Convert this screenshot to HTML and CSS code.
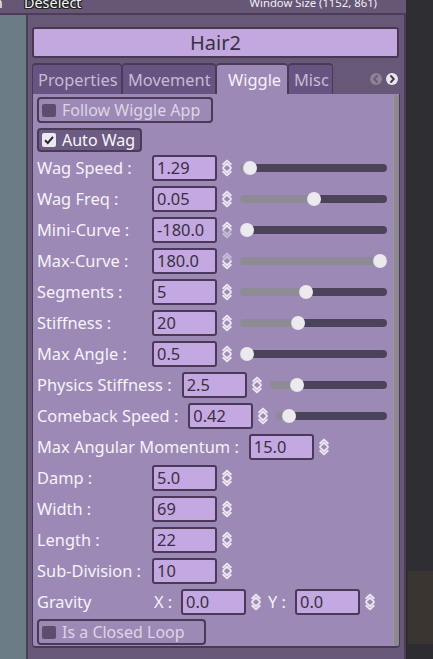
FILE: index.html
```html
<!DOCTYPE html>
<html>
<head>
<meta charset="utf-8">
<link rel="stylesheet" href="styles.css">
</head>
<body>
<div class="screen">
  <div class="left-col">
    <div class="topbar">
      <span class="tb-cut">n</span>
      <span class="tb-btn">Deselect</span>
      <span class="tb-info">Window Size (1152, 861)</span>
    </div>
    <div class="lower">
      <div class="strip"></div>
      <div class="panel">
        <div class="title">Hair2</div>
        <div class="tabs">
          <div class="tab">Properties</div>
          <div class="tab">Movement</div>
          <div class="tab active">Wiggle</div>
          <div class="tab">Misc</div>
          <div class="tab-arrows">
            <span class="arrow dim"><svg viewBox="0 0 12 12" width="12" height="12"><path d="M7 3 L4.2 6 L7 9" fill="none" stroke="#6a5f76" stroke-width="2" stroke-linecap="round" stroke-linejoin="round"/></svg></span>
            <span class="arrow"><svg viewBox="0 0 12 12" width="12" height="12"><path d="M5 3 L7.8 6 L5 9" fill="none" stroke="#4a4054" stroke-width="2" stroke-linecap="round" stroke-linejoin="round"/></svg></span>
          </div>
        </div>
        <div class="content">
          <div class="content-inner">
            <div class="check-btn follow"><span class="box"></span><span class="cb-text">Follow Wiggle App</span></div>
            <div class="check-btn on autowag"><span class="box checked"><svg viewBox="0 0 14 14" width="14" height="14"><path d="M3 7.2 L5.8 10 L11 3.8" fill="none" stroke="#2f2836" stroke-width="2"/></svg></span><span class="cb-text">Auto Wag</span></div>

            <div class="row"><span class="lbl">Wag Speed :</span><span class="num">1.29</span><span class="spin"><svg viewBox="0 0 10 18" width="10" height="18"><path d="M1.2 5.2 L5 1.6 L8.8 5.2 M1.2 8.4 L5 4.8 L8.8 8.4 M1.2 9.6 L5 13.2 L8.8 9.6 M1.2 12.8 L5 16.4 L8.8 12.8" /></svg></span><span class="slider" style="--f:0.023"><span class="grab"></span></span></div>
            <div class="row"><span class="lbl">Wag Freq :</span><span class="num">0.05</span><span class="spin"><svg viewBox="0 0 10 18" width="10" height="18"><path d="M1.2 5.2 L5 1.6 L8.8 5.2 M1.2 8.4 L5 4.8 L8.8 8.4 M1.2 9.6 L5 13.2 L8.8 9.6 M1.2 12.8 L5 16.4 L8.8 12.8" /></svg></span><span class="slider" style="--f:0.5"><span class="grab"></span></span></div>
            <div class="row"><span class="lbl">Mini-Curve :</span><span class="num">-180.0</span><span class="spin"><svg viewBox="0 0 10 18" width="10" height="18"><path d="M1.2 5.2 L5 1.6 L8.8 5.2 M1.2 8.4 L5 4.8 L8.8 8.4" /><path class="off" d="M1.2 9.6 L5 13.2 L8.8 9.6 M1.2 12.8 L5 16.4 L8.8 12.8" /></svg></span><span class="slider" style="--f:0"><span class="grab"></span></span></div>
            <div class="row"><span class="lbl">Max-Curve :</span><span class="num">180.0</span><span class="spin"><svg viewBox="0 0 10 18" width="10" height="18"><path class="off" d="M1.2 5.2 L5 1.6 L8.8 5.2 M1.2 8.4 L5 4.8 L8.8 8.4" /><path d="M1.2 9.6 L5 13.2 L8.8 9.6 M1.2 12.8 L5 16.4 L8.8 12.8" /></svg></span><span class="slider" style="--f:1"><span class="grab"></span></span></div>
            <div class="row"><span class="lbl">Segments :</span><span class="num">5</span><span class="spin"><svg viewBox="0 0 10 18" width="10" height="18"><path d="M1.2 5.2 L5 1.6 L8.8 5.2 M1.2 8.4 L5 4.8 L8.8 8.4 M1.2 9.6 L5 13.2 L8.8 9.6 M1.2 12.8 L5 16.4 L8.8 12.8" /></svg></span><span class="slider" style="--f:0.44"><span class="grab"></span></span></div>
            <div class="row"><span class="lbl">Stiffness :</span><span class="num">20</span><span class="spin"><svg viewBox="0 0 10 18" width="10" height="18"><path d="M1.2 5.2 L5 1.6 L8.8 5.2 M1.2 8.4 L5 4.8 L8.8 8.4 M1.2 9.6 L5 13.2 L8.8 9.6 M1.2 12.8 L5 16.4 L8.8 12.8" /></svg></span><span class="slider" style="--f:0.386"><span class="grab"></span></span></div>
            <div class="row"><span class="lbl">Max Angle :</span><span class="num">0.5</span><span class="spin"><svg viewBox="0 0 10 18" width="10" height="18"><path d="M1.2 5.2 L5 1.6 L8.8 5.2 M1.2 8.4 L5 4.8 L8.8 8.4 M1.2 9.6 L5 13.2 L8.8 9.6 M1.2 12.8 L5 16.4 L8.8 12.8" /></svg></span><span class="slider" style="--f:0"><span class="grab"></span></span></div>
            <div class="row"><span class="lbl">Physics Stiffness :</span><span class="num">2.5</span><span class="spin"><svg viewBox="0 0 10 18" width="10" height="18"><path d="M1.2 5.2 L5 1.6 L8.8 5.2 M1.2 8.4 L5 4.8 L8.8 8.4 M1.2 9.6 L5 13.2 L8.8 9.6 M1.2 12.8 L5 16.4 L8.8 12.8" /></svg></span><span class="slider" style="--f:0.2"><span class="grab"></span></span></div>
            <div class="row"><span class="lbl">Comeback Speed :</span><span class="num">0.42</span><span class="spin"><svg viewBox="0 0 10 18" width="10" height="18"><path d="M1.2 5.2 L5 1.6 L8.8 5.2 M1.2 8.4 L5 4.8 L8.8 8.4 M1.2 9.6 L5 13.2 L8.8 9.6 M1.2 12.8 L5 16.4 L8.8 12.8" /></svg></span><span class="slider" style="--f:0.06"><span class="grab"></span></span></div>
            <div class="row"><span class="lbl">Max Angular Momentum :</span><span class="num">15.0</span><span class="spin"><svg viewBox="0 0 10 18" width="10" height="18"><path d="M1.2 5.2 L5 1.6 L8.8 5.2 M1.2 8.4 L5 4.8 L8.8 8.4 M1.2 9.6 L5 13.2 L8.8 9.6 M1.2 12.8 L5 16.4 L8.8 12.8" /></svg></span></div>
            <div class="row"><span class="lbl">Damp :</span><span class="num">5.0</span><span class="spin"><svg viewBox="0 0 10 18" width="10" height="18"><path d="M1.2 5.2 L5 1.6 L8.8 5.2 M1.2 8.4 L5 4.8 L8.8 8.4 M1.2 9.6 L5 13.2 L8.8 9.6 M1.2 12.8 L5 16.4 L8.8 12.8" /></svg></span></div>
            <div class="row"><span class="lbl">Width :</span><span class="num">69</span><span class="spin"><svg viewBox="0 0 10 18" width="10" height="18"><path d="M1.2 5.2 L5 1.6 L8.8 5.2 M1.2 8.4 L5 4.8 L8.8 8.4 M1.2 9.6 L5 13.2 L8.8 9.6 M1.2 12.8 L5 16.4 L8.8 12.8" /></svg></span></div>
            <div class="row"><span class="lbl">Length :</span><span class="num">22</span><span class="spin"><svg viewBox="0 0 10 18" width="10" height="18"><path d="M1.2 5.2 L5 1.6 L8.8 5.2 M1.2 8.4 L5 4.8 L8.8 8.4 M1.2 9.6 L5 13.2 L8.8 9.6 M1.2 12.8 L5 16.4 L8.8 12.8" /></svg></span></div>
            <div class="row"><span class="lbl">Sub-Division :</span><span class="num">10</span><span class="spin"><svg viewBox="0 0 10 18" width="10" height="18"><path d="M1.2 5.2 L5 1.6 L8.8 5.2 M1.2 8.4 L5 4.8 L8.8 8.4 M1.2 9.6 L5 13.2 L8.8 9.6 M1.2 12.8 L5 16.4 L8.8 12.8" /></svg></span></div>
            <div class="row"><span class="lbl">Gravity</span><span class="axis x">X :</span><span class="num">0.0</span><span class="spin"><svg viewBox="0 0 10 18" width="10" height="18"><path d="M1.2 5.2 L5 1.6 L8.8 5.2 M1.2 8.4 L5 4.8 L8.8 8.4 M1.2 9.6 L5 13.2 L8.8 9.6 M1.2 12.8 L5 16.4 L8.8 12.8" /></svg></span><span class="axis y">Y :</span><span class="num">0.0</span><span class="spin"><svg viewBox="0 0 10 18" width="10" height="18"><path d="M1.2 5.2 L5 1.6 L8.8 5.2 M1.2 8.4 L5 4.8 L8.8 8.4 M1.2 9.6 L5 13.2 L8.8 9.6 M1.2 12.8 L5 16.4 L8.8 12.8" /></svg></span></div>
            <div class="check-btn closed"><span class="box"></span><span class="cb-text">Is a Closed Loop</span></div>
          </div>
          <div class="scrollbar"></div>
        </div>
      </div>
    </div>
  </div>
  <div class="right-col">
    <div class="rc-top"></div>
    <div class="rc-mid"></div>
    <div class="rc-bot"></div>
  </div>
</div>
</body>
</html>
```

FILE: styles.css
```css
* { box-sizing: border-box; }
html, body { margin: 0; padding: 0; }
body {
  width: 433px;
  height: 659px;
  overflow: hidden;
  background: #2e2d32;
  font-family: "Noto Sans", "DejaVu Sans", sans-serif;
}
.screen { display: flex; width: 433px; height: 659px; }
.left-col { width: 406px; display: flex; flex-direction: column; }
.right-col { flex: 1; display: flex; flex-direction: column; background: #2e2d32; }
.rc-top { height: 571px; background: #2f2e33; }
.rc-mid { height: 73px; background: #3b3532; margin-left: 2px; }
.rc-bot { flex: 1; background: #2c2c31; }

.topbar {
  height: 15px;
  background: #665777;
  border-bottom: 2px solid #4c3c57;
  display: flex;
  align-items: flex-end;
  overflow: hidden;
  color: #fff;
  white-space: nowrap;
}
.tb-cut { font-size: 14px; line-height: 14px; margin-left: -6px; margin-bottom: 3px; width: 10px; overflow: hidden; }
.tb-btn {
  font-size: 14.4px;
  line-height: 14px;
  margin-left: 20px;
  margin-bottom: 3px;
  color: #f4f4f4;
  text-shadow: 1px 0 0 #222, -1px 0 0 #222, 0 1px 0 #222, 0 -1px 0 #222, 1px 1px 0 #222, -1px -1px 0 #222, 1px -1px 0 #222, -1px 1px 0 #222;
}
.tb-info { font-size: 11.3px; line-height: 12px; margin-left: auto; margin-right: 29px; margin-bottom: 4px; color: #f2f0f4; }

.lower { flex: 1; display: flex; min-height: 0; }
.strip { width: 26px; background: #6b7c87; }
.panel {
  flex: 1;
  background: #685878;
  border-left: 2px solid #4c3c57;
  border-right: 2px solid #4c3c57;
  padding: 12px 4px 0 4px;
  display: flex;
  flex-direction: column;
}
.title {
  height: 31px;
  width: 367px;
  background: #c3a8e0;
  border: 2px solid #4a3853;
  border-radius: 3px;
  color: #3a3040;
  font-size: 20px;
  display: flex;
  align-items: center;
  justify-content: center;
  line-height: 1;
}
.tabs {
  margin-top: 5px;
  height: 31px;
  width: 368px;
  display: flex;
  align-items: stretch;
}
.tab {
  background: #675482;
  border: 1px solid #4b3a57;
  border-top-width: 2px;
  border-bottom: none;
  border-radius: 4px 4px 0 0;
  color: #c6bcd1;
  font-size: 16.4px;
  padding: 0 5px;
  display: flex;
  align-items: center;
  white-space: nowrap;
}
.tab.active { background: #9c89b6; color: #f6f2fa; }
.tab:nth-child(1) { width: 90px; }
.tab:nth-child(2) { width: 94px; }
.tab:nth-child(3) { width: 72px; padding-left: 11px; }
.tab:nth-child(4) { width: 45px; }
.tab-arrows { margin-left: auto; margin-right: 2px; display: flex; align-items: center; gap: 4px; }
.arrow { width: 12px; height: 12px; border-radius: 50%; background: #eae6ef; display: block; }
.arrow.dim { background: #8c8396; }
.arrow svg { display: block; }

.content {
  width: 368px;
  background: #9c89b6;
  border: 1px solid #4b3a57;
  border-bottom-width: 2px;
  border-top: none;
  border-radius: 0 0 4px 4px;
  display: flex;
}
.content-inner {
  flex: 1;
  padding: 3px 6px 1px 4px;
  display: flex;
  flex-direction: column;
}
.scrollbar { width: 6px; background: #8c8991; border-radius: 3px; margin: 1px 0 0 0; border-left: 1px solid #9a97a0; }

.check-btn {
  align-self: flex-start;
  display: flex;
  align-items: center;
  border: 2px solid #4b3a57;
  border-radius: 4px;
  padding: 0 11px 0 3px;
  color: #ddd6e4;
  font-size: 16px;
  white-space: nowrap;
}
.check-btn.follow { height: 26px; }
.check-btn.autowag { height: 24px; margin-top: 5px; padding-right: 5px; background: #6c5b82; color: #f8f6fa; }
.check-btn.closed { height: 26px; margin-top: 2px; padding-right: 19px; }
.box { width: 14px; height: 13px; border-radius: 2px; background: #5e4e6e; margin-right: 6px; flex: none; }
.box.checked { background: #ece9f0; height: 14px; }
.box svg { display: block; }
.cb-text { line-height: 1; }

.row {
  height: 31px;
  display: flex;
  align-items: center;
  color: #f6f3f9;
  font-size: 16.4px;
  white-space: nowrap;
}
.lbl { min-width: 105px; margin-right: 10px; }
.num {
  width: 65px;
  height: 26px;
  background: #c3a8e2;
  border: 2px solid #4b3a57;
  border-radius: 3px;
  color: #3a3040;
  font-size: 16.4px;
  padding-left: 3px;
  display: flex;
  align-items: center;
  flex: none;
}
.spin { margin-left: 5px; width: 10px; height: 18px; flex: none; }
.spin svg { display: block; }
.spin path { fill: none; stroke: #ebe7f0; stroke-width: 1.9; stroke-linecap: round; stroke-linejoin: round; }
.spin path.off { stroke: #c4bccf; }
.axis { width: 17px; margin-right: 10px; }
.axis.x { margin-left: 2px; }
.axis.y { margin-left: 7px; }

.slider {
  margin-left: 8px;
  flex: 1;
  height: 8px;
  border-radius: 4px;
  position: relative;
  background: linear-gradient(to right, #8e8a96 calc(7px + (100% - 14px) * var(--f)), #4b4359 calc(7px + (100% - 14px) * var(--f)));
}
.grab {
  position: absolute;
  top: -3px;
  left: calc((100% - 14px) * var(--f));
  width: 14px;
  height: 14px;
  border-radius: 50%;
  background: radial-gradient(circle at 60% 45%, #eceaef 55%, #d2cfd8 100%);
}
```
